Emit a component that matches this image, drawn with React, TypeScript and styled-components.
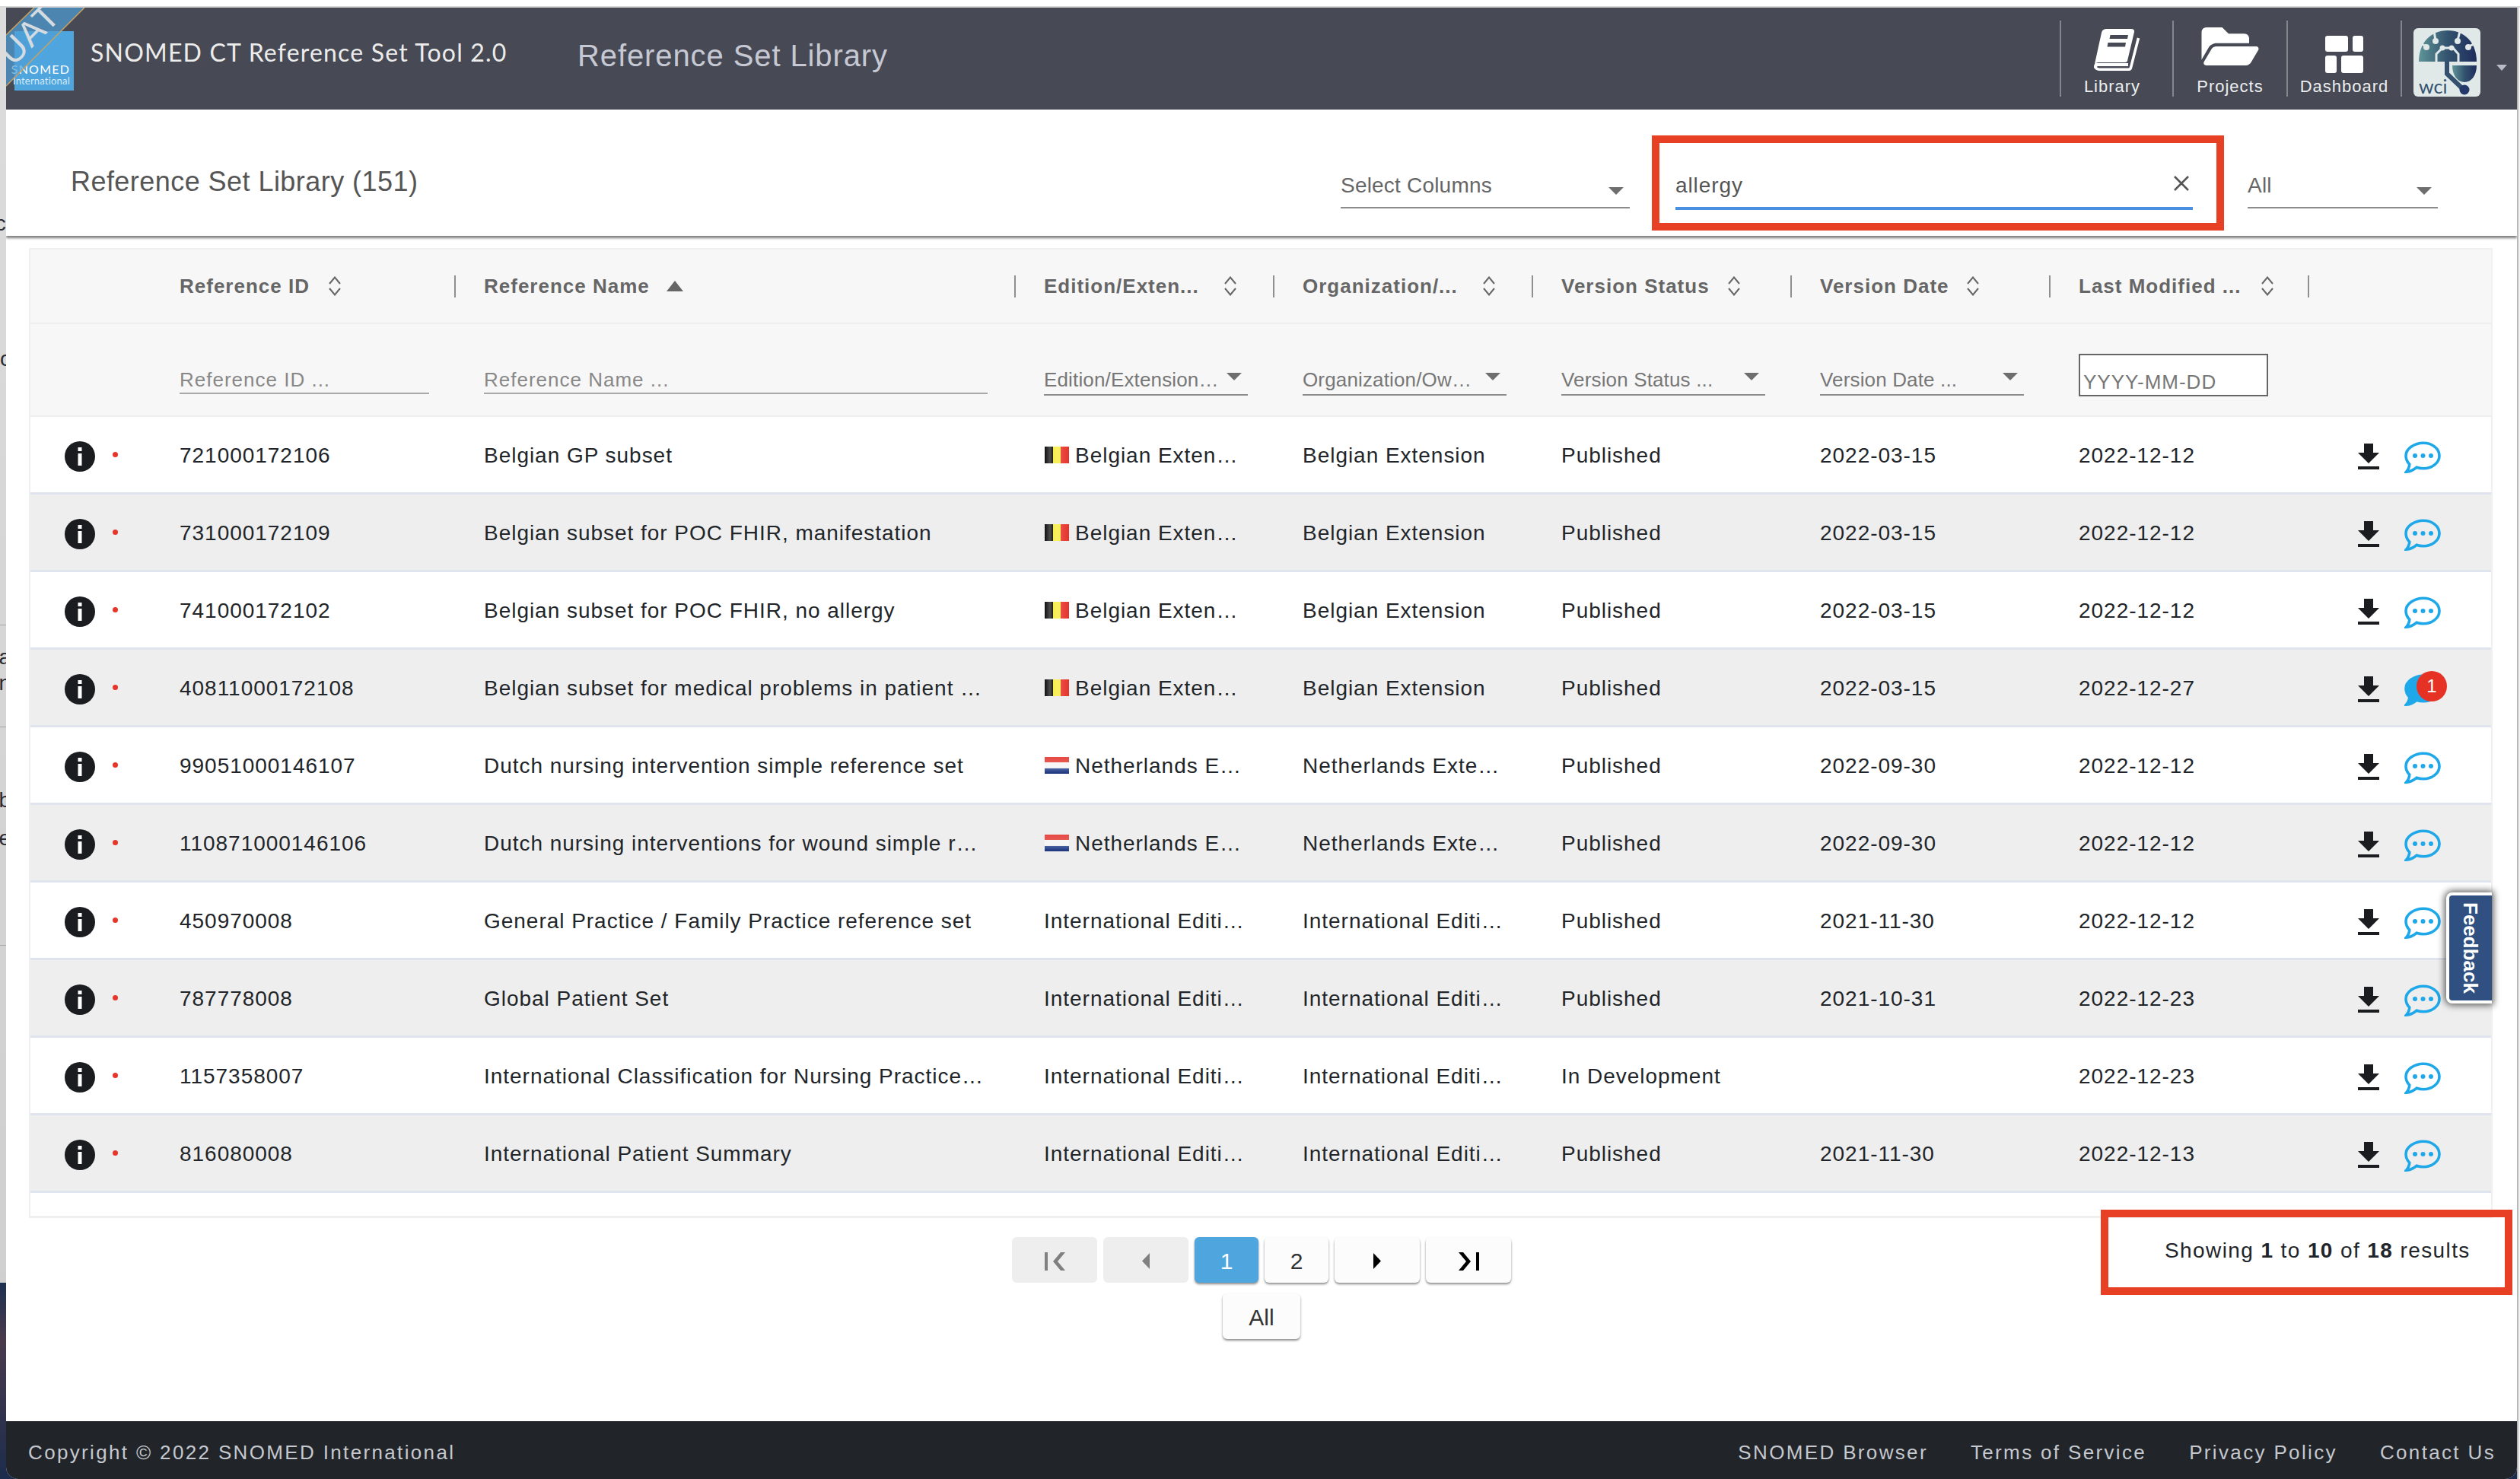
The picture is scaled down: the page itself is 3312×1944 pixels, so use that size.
import styled, { createGlobalStyle } from "styled-components";

const FONT = `"Liberation Sans", Arial, sans-serif`;

const Global = createGlobalStyle`
  * { box-sizing: border-box; }
  html, body { margin: 0; padding: 0; }
  body { background: #d6d6d6; font-family: ${FONT}; color: #212529; }
`;

const Screen = styled.div`
  position: relative;
  width: 3312px;
  height: 1944px;
  overflow: hidden;
  background: linear-gradient(#dcdcdc 0, #cfcfcf 1686px, #1d3150 1686px, #4a3a4c 1760px, #1c2c4c 1944px);
`;

const TopStrip = styled.div`
  height: 10px;
  background: #fff;
  border-bottom: 2px solid #d9d9d9;
`;

const RightStrip = styled.div`
  position: absolute;
  left: 3308px;
  top: 10px;
  width: 4px;
  height: 1934px;
  background: #f4f4f4;
  border-left: 2px solid #b8b8b8;
`;

const Peek = styled.div<{ $top: number }>`
  position: absolute;
  left: -14px;
  top: ${({ $top }) => $top}px;
  width: 28px;
  text-align: right;
  font-size: 28px;
  line-height: 32px;
  color: #2a2a30;
`;

const Hairline = styled.div<{ $top: number }>`
  position: absolute;
  left: 0;
  top: ${({ $top }) => $top}px;
  width: 8px;
  height: 1px;
  background: #a8a8a8;
`;

const Window = styled.div`
  position: relative;
  margin-left: 8px;
  width: 3300px;
  height: 1934px;
  background: #fff;
  border-bottom-left-radius: 16px;
  border-bottom-right-radius: 16px;
  display: flex;
  flex-direction: column;
  overflow: hidden;
`;

/* ---------- header ---------- */

const Header = styled.header`
  height: 134px;
  flex: none;
  background: #474a54;
  display: flex;
  align-items: center;
  position: relative;
`;

const LogoBox = styled.div`
  width: 78px;
  height: 78px;
  margin: 6px 0 0 11px;
  background: #4fa5dd;
  display: flex;
  flex-direction: column;
  justify-content: flex-end;
  align-items: flex-end;
  padding: 0 5px 6px 0;
  color: #fff;
  flex: none;
`;

const LogoMain = styled.span`
  font-family: "Lato", ${FONT};
  font-size: 16px;
  line-height: 16px;
  letter-spacing: 1.2px;
`;

const LogoSub = styled.span`
  font-family: "Lato", ${FONT};
  font-size: 13px;
  line-height: 14px;
  letter-spacing: 0.2px;
  color: #d5eaf8;
`;

const Ribbon = styled.svg`
  position: absolute;
  left: 0;
  top: 0;
`;

const AppName = styled.div`
  margin: -18px 0 0 22px;
  width: 640px;
  flex: none;
  font-family: "Lato", ${FONT};
  font-size: 32px;
  letter-spacing: 1.2px;
  color: #ececec;
  white-space: nowrap;
`;

const PageName = styled.div`
  margin-top: -8px;
  font-size: 40px;
  letter-spacing: 0.9px;
  color: #c6c9d4;
  white-space: nowrap;
`;

const Nav = styled.nav`
  margin-left: auto;
  height: 100%;
  display: flex;
  align-items: flex-start;
  padding-top: 17px;
`;

const NavItem = styled.div<{ $w: number }>`
  width: ${({ $w }) => $w}px;
  height: 100px;
  border-left: 2px solid #84868c;
  display: flex;
  flex-direction: column;
  align-items: center;
  color: #eceef0;
  font-size: 22px;
  letter-spacing: 1px;
  line-height: 26px;
`;

const NavIcon = styled.div<{ $pad: number }>`
  height: 74px;
  padding-top: ${({ $pad }) => $pad}px;
  flex: none;
`;

const NavLabel = styled.span<{ $shift?: number }>`
  margin-right: ${({ $shift }) => $shift ?? 0}px;
`;

const Avatar = styled.div`
  width: 88px;
  height: 90px;
  margin: 10px 0 0 15px;
  border-radius: 6px;
  background: #e0e8e8;
  overflow: hidden;
  flex: none;
`;

const Caret = styled.div`
  width: 0;
  height: 0;
  border-left: 7px solid transparent;
  border-right: 7px solid transparent;
  border-top: 8px solid #b9bcc8;
  margin: 58px 13px 0 21px;
`;

/* ---------- toolbar ---------- */

const Toolbar = styled.div`
  height: 166px;
  flex: none;
  padding: 29px 104px 2px 85px;
  display: flex;
  align-items: center;
  box-shadow: 0 3px 3px rgba(0, 0, 0, 0.5);
  position: relative;
  background: #fff;
`;

const Title = styled.h1`
  margin: -4px auto 0 0;
  font-size: 36px;
  font-weight: 400;
  letter-spacing: 0.45px;
  color: #555;
  white-space: nowrap;
`;

const Select = styled.div<{ $w: number }>`
  width: ${({ $w }) => $w}px;
  height: 60px;
  margin-top: 6px;
  border-bottom: 2px solid #8c8c8c;
  display: flex;
  justify-content: space-between;
  font-size: 28px;
  letter-spacing: 0.2px;
  line-height: 32px;
  color: #666;
  padding: 14px 8px 0 0;
`;

const ArrowDown = styled.span<{ $top?: number }>`
  width: 0;
  height: 0;
  margin-top: ${({ $top }) => $top ?? 18}px;
  border-left: 10px solid transparent;
  border-right: 10px solid transparent;
  border-top: 10px solid #6e6e6e;
  flex: none;
`;

const SearchBox = styled.div`
  width: 752px;
  height: 125px;
  margin: 0 31px 0 29px;
  border: 10px solid #e84025;
  padding: 21px 31px 0 21px;
`;

const SearchField = styled.div`
  height: 67px;
  display: flex;
  align-items: flex-start;
  justify-content: space-between;
  border-bottom: 4px solid #4a90e2;
  font-size: 28px;
  letter-spacing: 0.9px;
  line-height: 32px;
  color: #555;
  padding: 19px 4px 0 0;
`;

const Close = styled.svg`
  margin-top: 2px;
`;

/* ---------- table ---------- */

const Table = styled.div`
  margin: 16px 32px 0 30px;
  height: 1275px;
  flex: none;
  border-left: 2px solid #f0f0f0;
  border-right: 2px solid #f0f0f0;
  border-bottom: 3px solid #f0f0f0;
  border-top: 2px solid #f0f0f0;
`;

const COLUMNS = "159px 400px 736px repeat(5, 340px) 1fr";

const HeadRow = styled.div`
  height: 98px;
  display: grid;
  grid-template-columns: ${COLUMNS};
  background: #f7f7f7;
  border-bottom: 2px solid #eeeeee;
`;

const HeadCell = styled.div<{ $sep?: boolean; $gap?: number }>`
  display: flex;
  align-items: center;
  gap: ${({ $gap }) => $gap ?? 24}px;
  padding-left: 37px;
  height: 100%;
  position: relative;
  font-size: 26px;
  font-weight: 700;
  letter-spacing: 1px;
  color: #666;
  white-space: nowrap;

  &::after {
    content: "";
    display: ${({ $sep }) => ($sep ? "block" : "none")};
    position: absolute;
    right: 0;
    top: 34px;
    width: 2px;
    height: 29px;
    background: #8f8f8f;
  }
`;

const FilterRow = styled(HeadRow)`
  height: 122px;
`;

const FilterCell = styled.div`
  padding-left: 37px;
  height: 100%;
  display: flex;
  align-items: flex-end;
`;

const TextFilter = styled.div<{ $w: number }>`
  width: ${({ $w }) => $w}px;
  height: 46px;
  margin-bottom: 28px;
  border-bottom: 2px solid #a8a8a8;
  font-size: 26px;
  letter-spacing: 1px;
  line-height: 30px;
  color: #888;
  padding-top: 12px;
  white-space: nowrap;
`;

const SelectFilter = styled.div`
  width: 268px;
  height: 48px;
  margin-bottom: 26px;
  border-bottom: 2px solid #8c8c8c;
  display: flex;
  justify-content: space-between;
  font-size: 26px;
  letter-spacing: 0.15px;
  line-height: 30px;
  color: #777;
  padding: 12px 8px 0 0;
  white-space: nowrap;
`;

const DateFilter = styled.div`
  width: 249px;
  height: 56px;
  margin-bottom: 25px;
  background: #fff;
  border: 2px solid #666;
  font-size: 26px;
  letter-spacing: 1px;
  line-height: 30px;
  padding: 20px 0 0 4px;
  color: #777;
  white-space: nowrap;
  overflow: hidden;
`;

const Row = styled.div<{ $odd: boolean }>`
  height: 102px;
  display: grid;
  grid-template-columns: ${COLUMNS};
  align-items: center;
  background: ${({ $odd }) => ($odd ? "#eeeeee" : "#fff")};
  border-bottom: 3px solid #e0e4ee;
`;

const Cell = styled.div`
  padding-left: 37px;
  padding-top: 3px;
  font-size: 28px;
  letter-spacing: 0.97px;
  white-space: nowrap;
  display: flex;
  align-items: center;
`;

const InfoCell = styled.div`
  display: flex;
  align-items: center;
  padding: 4px 0 0 45px;
  gap: 23px;
`;

const InfoIcon = styled.span`
  width: 40px;
  height: 40px;
  border-radius: 50%;
  background: #1a1c20;
  color: #fff;
  display: flex;
  align-items: center;
  justify-content: center;
  flex: none;
`;

const RedDot = styled.span`
  width: 7px;
  height: 7px;
  border-radius: 50%;
  background: #e8352a;
  margin-top: -5px;
`;

const Flag = styled.span<{ $country: "be" | "nl" }>`
  width: 32px;
  height: 22px;
  margin: -3px 8px 0 1px;
  flex: none;
  background: ${({ $country }) =>
    $country === "be"
      ? `linear-gradient(90deg, #111 0 33%, #2c2c2c 33.3%, #f7ea3c 33.4% 66.6%, #e6322a 66.7%)`
      : `linear-gradient(#e2342c 0 33%, #f4f4f4 33.4% 66.6%, #1f3f8f 66.7% 100%)`};
  position: relative;
  overflow: hidden;

  &::after {
    content: "";
    position: absolute;
    inset: 0;
    background: ${({ $country }) =>
      $country === "be"
        ? "linear-gradient(90deg, rgba(255,255,255,0) 0, rgba(255,255,255,.25) 22%, rgba(255,255,255,.05) 34%, rgba(255,255,255,.2) 50%, rgba(255,255,255,0) 100%)"
        : "linear-gradient(rgba(255,255,255,.1) 0, rgba(255,255,255,.25) 60%, rgba(0,0,40,.2) 100%)"};
  }
`;

const Actions = styled.div`
  display: flex;
  align-items: center;
  padding: 7px 0 0 54px;
  gap: 23px;
`;

const ChatWrap = styled.span`
  position: relative;
  display: flex;
  width: 48px;
  height: 42px;
`;

const Badge = styled.span`
  position: absolute;
  left: 16px;
  top: -4px;
  width: 40px;
  height: 40px;
  border-radius: 50%;
  background: #e63225;
  color: #fff;
  font-size: 24px;
  line-height: 40px;
  text-align: center;
`;

const Feedback = styled.div`
  position: absolute;
  left: 3207px;
  top: 1163px;
  width: 60px;
  height: 146px;
  background: #2f5080;
  border: 4px solid #fff;
  border-right: none;
  border-radius: 8px 0 0 8px;
  box-shadow: 0 0 10px 2px rgba(0, 0, 0, 0.65);
  display: flex;
  align-items: center;
  justify-content: center;
`;

const FeedbackText = styled.span`
  writing-mode: vertical-rl;
  color: #fff;
  font-size: 26px;
  font-weight: 700;
  line-height: 1;
`;

/* ---------- pagination ---------- */

const Pager = styled.div`
  margin-top: 25px;
  display: flex;
  justify-content: center;
  gap: 8px;
`;

const PageButton = styled.div<{ $w: number; $state?: "off" | "on" }>`
  width: ${({ $w }) => $w}px;
  height: 60px;
  padding-top: 3px;
  border-radius: 6px;
  display: flex;
  align-items: center;
  justify-content: center;
  font-size: 30px;
  background: ${({ $state }) =>
    $state === "off" ? "#eeeeee" : $state === "on" ? "#4fa5dd" : "#fcfcfc"};
  color: ${({ $state }) => ($state === "on" ? "#fff" : "#333")};
  box-shadow: ${({ $state }) =>
    $state === "off" ? "none" : "0 2px 3px rgba(0,0,0,.45)"};
`;

const AllRow = styled(Pager)`
  margin-top: 14px;
`;

const Results = styled.div`
  position: absolute;
  left: 2753px;
  top: 1580px;
  width: 541px;
  height: 112px;
  border: 10px solid #e84025;
  padding: 27px 0 0 74px;
  font-size: 28px;
  letter-spacing: 1.4px;
  line-height: 34px;
  color: #212529;
  white-space: nowrap;
`;

/* ---------- footer ---------- */

const Footer = styled.footer`
  margin-top: auto;
  height: 76px;
  flex: none;
  background: #212529;
  display: flex;
  align-items: center;
  padding: 6px 28px 0 29px;
  font-size: 26px;
  letter-spacing: 2.35px;
  color: #c5c8ce;
`;

const FooterLinks = styled.div`
  margin-left: auto;
  display: flex;
  gap: 56px;
`;

/* ---------- icons ---------- */

const BookIcon = () => (
  <svg width="62" height="56" viewBox="0 0 62 56">
    <path fill="#fff" d="M18 1H50Q54.500 1 54 5L45 43Q44.500 45 42 45H7Q4 45 2 47L11 6Q12 1 18 1Z" />
    <path fill="#474a54" d="M22.500 9H46L45 14H21.500ZM19.500 19H43L42 24.500H18.500Z" />
    <path fill="none" stroke="#fff" strokeWidth="3.500" d="M5 46Q0 53 8 54.200H47Q49 54 49.500 52L59.500 13" />
    <path fill="#fff" d="M2 47Q0 52 2 53L6 50H46L46 46H6Z" />
  </svg>
);

const FolderIcon = () => (
  <svg width="76" height="50" viewBox="0 64 576 384">
    <path
      fill="#fff"
      d="M572.694 292.093L500.27 416.248A63.997 63.997 0 0 1 444.989 448H45.025c-18.523 0-30.064-20.093-20.731-36.093l72.424-124.155A64 64 0 0 1 152 256h399.964c18.523 0 30.064 20.093 20.73 36.093zM152 224h328v-48c0-26.51-21.49-48-48-48H272l-64-64H48C21.49 64 0 85.49 0 112v278.046l69.077-118.418C86.214 242.25 117.989 224 152 224z"
    />
  </svg>
);

const DashboardIcon = () => (
  <svg width="50" height="49" viewBox="0 0 50 49" fill="#fff">
    <rect x="0" y="0" width="30" height="21" rx="3" />
    <rect x="36" y="0" width="14" height="21" rx="3" />
    <rect x="0" y="26" width="15" height="23" rx="3" />
    <rect x="21" y="26" width="29" height="23" rx="3" />
  </svg>
);

const WciLogo = () => (
  <svg width="88" height="90" viewBox="0 0 88 90">
    <defs>
      <linearGradient id="wciGrad" x1="0" x2="1" y1="0" y2="0">
        <stop offset="0" stopColor="#5f9497" />
        <stop offset="0.5" stopColor="#33536f" />
        <stop offset="1" stopColor="#1f2d5c" />
      </linearGradient>
    </defs>
    <path fill="url(#wciGrad)" d="M7 44C7 20 22 3 45 3S83 20 83 44H7Z" />
    <path fill="url(#wciGrad)" d="M51 49H83C83 62 76 71 67 71S51 62 51 49Z" />
    <path fill="none" stroke="#e0e8e8" strokeWidth="3" d="M30 44V34L38 26H52L59 34V44" />
    <path fill="none" stroke="#e0e8e8" strokeWidth="3" d="M27 4L29 16M61 4L58 16M9 20L17 24M81 20L73 24" />
    <circle cx="29" cy="17" r="4" fill="#e0e8e8" />
    <circle cx="58" cy="17" r="4" fill="#e0e8e8" />
    <circle cx="17" cy="25" r="4" fill="#e0e8e8" />
    <circle cx="72" cy="25" r="4" fill="#e0e8e8" />
    <circle cx="38" cy="26" r="3.500" fill="#e0e8e8" />
    <circle cx="50" cy="26" r="3.500" fill="#e0e8e8" />
    <path fill="none" stroke="#33506f" strokeWidth="6" d="M44 44V60L65 80" />
    <circle cx="67" cy="81" r="6.500" fill="#24386a" />
    <text x="7" y="86" fontFamily="Lato, sans-serif" fontSize="25" fill="#33506f">
      wci
    </text>
  </svg>
);

const SortIcon = () => (
  <svg width="18" height="26" viewBox="0 0 18 26" fill="none" stroke="#666" strokeWidth="2">
    <path d="M2 10L9 1.500L16 10M2 16L9 24.500L16 16" />
  </svg>
);

const SortedIcon = () => (
  <svg width="22" height="14" viewBox="0 0 22 14">
    <path d="M11 0L22 14H0Z" fill="#666" />
  </svg>
);

const DownloadIcon = () => (
  <svg width="48" height="48" viewBox="0 0 24 24" fill="#1a1c20">
    <path d="M19 9h-4V3H9v6H5l7 7 7-7zM5 18v2h14v-2H5z" />
  </svg>
);

const ChatIcon = ({ filled }: { filled?: boolean }) => (
  <svg width="48" height="42" viewBox="0 0 48 42">
    <path
      d="M25 2.200C36.500 2.200 46 9.500 46 19C46 28.500 36.500 35.800 25 35.800C21.800 35.800 18.800 35.300 16 34.300C12 37.800 8 39.800 2.500 40.200C5 37.500 6.500 34.500 6.800 30.200C3.800 27.200 2 23.300 2 19C2 9.500 13.500 2.200 25 2.200Z"
      fill={filled ? "#1fa8e9" : "none"}
      stroke="#1fa8e9"
      strokeWidth="3.600"
    />
    {!filled && (
      <g fill="#1fa8e9">
        <circle cx="14" cy="19" r="3" />
        <circle cx="24.500" cy="19" r="3" />
        <circle cx="35" cy="19" r="3" />
      </g>
    )}
  </svg>
);

const InfoGlyph = () => (
  <svg width="8" height="24" viewBox="0 0 8 24" fill="#fff">
    <rect x="1.500" y="0" width="5" height="5" />
    <rect x="1.500" y="8" width="5" height="16" />
  </svg>
);

type RowData = {
  id: string;
  name: string;
  edition: string;
  flag?: "be" | "nl";
  org: string;
  status: string;
  version: string;
  modified: string;
  unread?: number;
};

const be = { edition: "Belgian Exten…", flag: "be" as const, org: "Belgian Extension", status: "Published", version: "2022-03-15" };
const nl = { edition: "Netherlands E…", flag: "nl" as const, org: "Netherlands Exte…", status: "Published", version: "2022-09-30" };
const intl = { edition: "International Editi…", org: "International Editi…", status: "Published" };

const rows: RowData[] = [
  { ...be, id: "721000172106", name: "Belgian GP subset", modified: "2022-12-12" },
  { ...be, id: "731000172109", name: "Belgian subset for POC FHIR, manifestation", modified: "2022-12-12" },
  { ...be, id: "741000172102", name: "Belgian subset for POC FHIR, no allergy", modified: "2022-12-12" },
  { ...be, id: "40811000172108", name: "Belgian subset for medical problems in patient …", modified: "2022-12-27", unread: 1 },
  { ...nl, id: "99051000146107", name: "Dutch nursing intervention simple reference set", modified: "2022-12-12" },
  { ...nl, id: "110871000146106", name: "Dutch nursing interventions for wound simple r…", modified: "2022-12-12" },
  { ...intl, id: "450970008", name: "General Practice / Family Practice reference set", version: "2021-11-30", modified: "2022-12-12" },
  { ...intl, id: "787778008", name: "Global Patient Set", version: "2021-10-31", modified: "2022-12-23" },
  { ...intl, id: "1157358007", name: "International Classification for Nursing Practice…", status: "In Development", version: "", modified: "2022-12-23" },
  { ...intl, id: "816080008", name: "International Patient Summary", version: "2021-11-30", modified: "2022-12-13" },
];

const headers: { label: string; gap: number }[] = [
  { label: "Reference ID", gap: 24 },
  { label: "Reference Name", gap: 22 },
  { label: "Edition/Exten...", gap: 32 },
  { label: "Organization/...", gap: 32 },
  { label: "Version Status", gap: 23 },
  { label: "Version Date", gap: 22 },
  { label: "Last Modified ...", gap: 26 },
];

export default function App() {
  return (
    <Screen>
      <Global />
      <TopStrip />
      <RightStrip />
      <Peek $top={278}>cl</Peek>
      <Peek $top={402}>i</Peek>
      <Peek $top={456}>c</Peek>
      <Hairline $top={821} />
      <Peek $top={848}>a</Peek>
      <Peek $top={882}>n</Peek>
      <Hairline $top={955} />
      <Peek $top={1036}>b</Peek>
      <Peek $top={1086}>e</Peek>
      <Peek $top={1164}>i</Peek>
      <Hairline $top={1242} />
      <Window>
        <Header>
          <LogoBox>
            <LogoMain>SNOMED</LogoMain>
            <LogoSub>International</LogoSub>
          </LogoBox>
          <Ribbon width="112" height="104" viewBox="0 0 112 104">
            <path d="M0 36L37 0H103L0 103Z" fill="#4f9ed6" fillOpacity="0.7" />
            <path d="M0 36L37 0M0 103L103 0" stroke="#c8a060" strokeWidth="1.500" />
            <text
              x="0"
              y="0"
              transform="translate(9 78) rotate(-45)"
              fontFamily="Liberation Sans, sans-serif"
              fontSize="46"
              fill="#d4dce2"
              letterSpacing="1"
            >
              UAT
            </text>
          </Ribbon>
          <AppName>SNOMED CT Reference Set Tool 2.0</AppName>
          <PageName>Reference Set Library</PageName>
          <Nav>
            <NavItem $w={148}>
              <NavIcon $pad={10}><BookIcon /></NavIcon>
              <NavLabel $shift={12}>Library</NavLabel>
            </NavItem>
            <NavItem $w={150}>
              <NavIcon $pad={9}><FolderIcon /></NavIcon>
              <NavLabel>Projects</NavLabel>
            </NavItem>
            <NavItem $w={150}>
              <NavIcon $pad={20}><DashboardIcon /></NavIcon>
              <NavLabel>Dashboard</NavLabel>
            </NavItem>
            <NavItem $w={2} />
            <Avatar><WciLogo /></Avatar>
            <Caret />
          </Nav>
        </Header>

        <Toolbar>
          <Title>Reference Set Library (151)</Title>
          <Select $w={380}>
            <span>Select Columns</span>
            <ArrowDown />
          </Select>
          <SearchBox>
            <SearchField>
              <span>allergy</span>
              <Close width="22" height="22" viewBox="0 0 22 22" stroke="#555" strokeWidth="2.500">
                <path d="M2 2L20 20M20 2L2 20" />
              </Close>
            </SearchField>
          </SearchBox>
          <Select $w={250}>
            <span>All</span>
            <ArrowDown />
          </Select>
        </Toolbar>

        <Table>
          <HeadRow>
            <HeadCell />
            {headers.map((h, i) => (
              <HeadCell key={h.label} $sep $gap={h.gap}>
                <span>{h.label}</span>
                {i === 1 ? <SortedIcon /> : <SortIcon />}
              </HeadCell>
            ))}
            <HeadCell />
          </HeadRow>
          <FilterRow>
            <FilterCell />
            <FilterCell><TextFilter $w={328}>Reference ID ...</TextFilter></FilterCell>
            <FilterCell><TextFilter $w={662}>Reference Name ...</TextFilter></FilterCell>
            <FilterCell>
              <SelectFilter><span>Edition/Extension…</span><ArrowDown $top={6} /></SelectFilter>
            </FilterCell>
            <FilterCell>
              <SelectFilter><span>Organization/Ow…</span><ArrowDown $top={6} /></SelectFilter>
            </FilterCell>
            <FilterCell>
              <SelectFilter><span>Version Status ...</span><ArrowDown $top={6} /></SelectFilter>
            </FilterCell>
            <FilterCell>
              <SelectFilter><span>Version Date ...</span><ArrowDown $top={6} /></SelectFilter>
            </FilterCell>
            <FilterCell><DateFilter>YYYY-MM-DD</DateFilter></FilterCell>
            <FilterCell />
          </FilterRow>
          {rows.map((r, i) => (
            <Row key={r.id} $odd={i % 2 === 1}>
              <InfoCell>
                <InfoIcon><InfoGlyph /></InfoIcon>
                <RedDot />
              </InfoCell>
              <Cell>{r.id}</Cell>
              <Cell>{r.name}</Cell>
              <Cell>
                {r.flag && <Flag $country={r.flag} />}
                {r.edition}
              </Cell>
              <Cell>{r.org}</Cell>
              <Cell>{r.status}</Cell>
              <Cell>{r.version}</Cell>
              <Cell>{r.modified}</Cell>
              <Actions>
                <DownloadIcon />
                <ChatWrap>
                  <ChatIcon filled={!!r.unread} />
                  {r.unread && <Badge>{r.unread}</Badge>}
                </ChatWrap>
              </Actions>
            </Row>
          ))}
        </Table>

        <Pager>
          <PageButton $w={112} $state="off">
            <svg width="27" height="24" viewBox="0 0 27 24" fill="#808080">
              <rect x="0" y="0" width="4" height="24" />
              <path d="M21 0L11 12L21 24H27L17 12L27 0Z" />
            </svg>
          </PageButton>
          <PageButton $w={112} $state="off">
            <svg width="10" height="21" viewBox="0 0 10 21" fill="#808080"><path d="M10 0V21L0 10.500Z" /></svg>
          </PageButton>
          <PageButton $w={84} $state="on">1</PageButton>
          <PageButton $w={84}>2</PageButton>
          <PageButton $w={112}>
            <svg width="10" height="21" viewBox="0 0 10 21" fill="#000"><path d="M0 0V21L10 10.500Z" /></svg>
          </PageButton>
          <PageButton $w={112}>
            <svg width="27" height="24" viewBox="0 0 27 24" fill="#000">
              <rect x="23" y="0" width="4" height="24" />
              <path d="M6 0L16 12L6 24H0L10 12L0 0Z" />
            </svg>
          </PageButton>
        </Pager>
        <AllRow>
          <PageButton $w={102}>All</PageButton>
        </AllRow>

        <Footer>
          <span>Copyright © 2022 SNOMED International</span>
          <FooterLinks>
            <span>SNOMED Browser</span>
            <span>Terms of Service</span>
            <span>Privacy Policy</span>
            <span>Contact Us</span>
          </FooterLinks>
        </Footer>

        <Feedback><FeedbackText>Feedback</FeedbackText></Feedback>
        <Results>
          Showing <b>1</b> to <b>10</b> of <b>18</b> results
        </Results>
      </Window>
    </Screen>
  );
}
